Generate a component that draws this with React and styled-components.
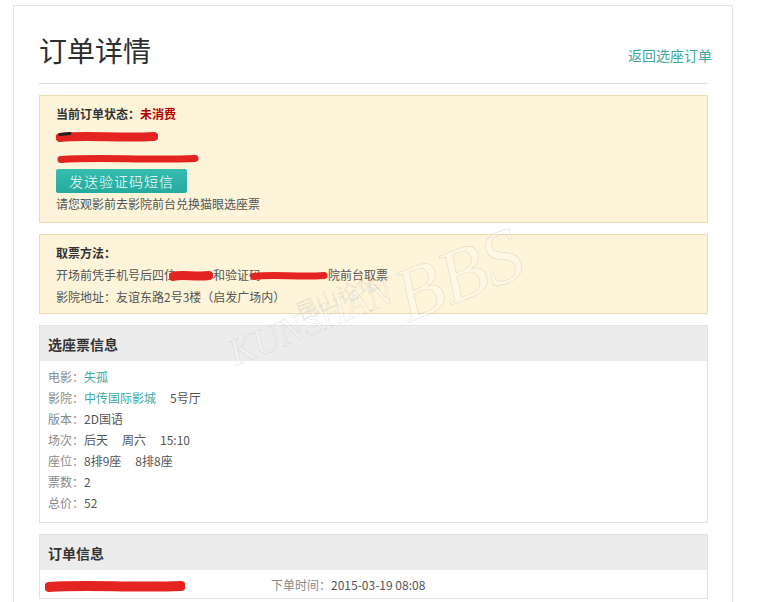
import React from 'react'
import styled, { createGlobalStyle } from 'styled-components'

const GlobalStyle = createGlobalStyle`
  body {
    margin: 0;
    background: #fff;
    font-family: "Noto Sans CJK SC", "Microsoft YaHei", sans-serif;
    font-size: 12px;
    color: #555;
  }
`

const Page = styled.div`
  position: relative;
  padding: 5px 0 0 13px;
  overflow: hidden;
  height: 597px;
`

const Card = styled.div`
  width: 720px;
  border: 1px solid #e6e6e6;
  padding: 27px 24px 20px 25px;
  box-sizing: border-box;
`

const Header = styled.div`
  display: flex;
  justify-content: space-between;
  align-items: flex-end;
  padding-bottom: 16px;
  border-bottom: 1px solid #d9dde0;
`

const Title = styled.h1`
  margin: 0;
  font-size: 28px;
  line-height: 34px;
  font-weight: 400;
  color: #2e2e2e;
`

const BackLink = styled.a`
  font-size: 14px;
  line-height: 20px;
  color: #3aa9a3;
  text-decoration: none;
  margin: 0 -4px 2px 0;
`

const Notice = styled.div`
  margin-top: 11px;
  background: #fef4da;
  border: 1px solid #ecdcb4;
  padding: ${p => p.$tight ? '7px 16px 5px' : '7px 16px 7px'};
  line-height: 22px;
  color: #555;
`

const Line = styled.div`
  height: 22px;
  display: flex;
  align-items: center;
  white-space: nowrap;
`

const Strong = styled.span`
  font-weight: 700;
  color: #333;
`

const Status = styled.span`
  font-weight: 700;
  color: #b30000;
`

const SendButton = styled.button`
  display: block;
  width: 131px;
  height: 24px;
  border: 0;
  border-radius: 2px;
  background: linear-gradient(#35bdb0, #25ab9e);
  color: #fff;
  font-family: inherit;
  font-size: 14px;
  font-weight: 300;
  letter-spacing: 1px;
  padding: 0;
`

const Scribble = styled.svg`
  display: inline-block;
  flex: none;
  margin-left: ${p => p.$ml || 0}px;
  vertical-align: middle;
`

const Panel = styled.div`
  margin-top: 11px;
  border: 1px solid #e2e2e2;
`

const PanelHead = styled.div`
  background: #ececec;
  height: 35px;
  display: flex;
  align-items: center;
  padding-left: 8px;
  font-size: 14px;
  font-weight: 700;
  color: #333;
`

const PanelBody = styled.div`
  padding: 5px 8px 9px;
`

const Row = styled.div`
  line-height: 21px;
  height: 21px;
  white-space: nowrap;
`

const Label = styled.span`
  color: #8a8a8a;
`

const Value = styled.span`
  color: #555;
  margin-right: ${p => p.$gap ? 14 : 0}px;
`

const Link = styled.a`
  color: #3aa9a3;
  text-decoration: none;
  margin-right: 14px;
`

const InfoGrid = styled.div`
  display: grid;
  grid-template-columns: 226px 1fr;
  align-items: center;
  height: 28px;
  padding-left: 5px;
  white-space: nowrap;
`

const Watermark = styled.div`
  position: absolute;
  pointer-events: none;
  left: ${p => p.$x}px;
  top: ${p => p.$y}px;
  transform: rotate(${p => p.$r}deg);
  transform-origin: left bottom;
  font-family: ${p => p.$cjk ? '"Noto Sans CJK SC", sans-serif' : '"Liberation Serif", serif'};
  font-style: ${p => p.$cjk ? 'normal' : 'italic'};
  font-weight: 300;
  font-size: ${p => p.$size}px;
  letter-spacing: ${p => p.$ls || 0}px;
  color: rgba(255, 255, 255, 0.25);
  -webkit-text-stroke: 0.6px rgba(120, 120, 120, 0.2);
  line-height: 1;
  white-space: nowrap;
`

function Redact({ w, h = 12, ml, dark }) {
  return (
    <Scribble $ml={ml} width={w} height={h} viewBox={`0 0 ${w} ${h}`}>
      <path
        d={`M4 ${h / 2 + 1} C ${w * 0.3} ${h / 2 - 2}, ${w * 0.6} ${h / 2 + 2}, ${w - 4} ${h / 2}`}
        stroke="#e42421"
        strokeWidth={h - 4}
        strokeLinecap="round"
        fill="none"
      />
      {dark && <path d={`M4 ${h / 2 - 2} L 14 ${h / 2 - 3}`} stroke="#222" strokeWidth="3" strokeLinecap="round" />}
    </Scribble>
  )
}

export default function App() {
  return (
    <Page>
      <GlobalStyle />
      <Card>
        <Header>
          <Title>订单详情</Title>
          <BackLink href="#">返回选座订单</BackLink>
        </Header>

        <Notice>
          <Line><Strong>当前订单状态：</Strong><Status>未消费</Status></Line>
          <Line><Redact w={102} h={13} dark /></Line>
          <Line><Redact w={142} h={11} ml={1} /></Line>
          <SendButton>发送验证码短信</SendButton>
          <Line>请您观影前去影院前台兑换猫眼选座票</Line>
        </Notice>

        <Notice $tight>
          <Line><Strong>取票方法：</Strong></Line>
          <Line>
            开场前凭手机号后四位
            <Redact w={44} h={13} ml={-7} />
            和验证码
            <Redact w={78} h={11} ml={-11} />
            院前台取票
          </Line>
          <Line>影院地址：友谊东路2号3楼（启发广场内）</Line>
        </Notice>

        <Panel>
          <PanelHead>选座票信息</PanelHead>
          <PanelBody>
            <Row><Label>电影：</Label><Link href="#">失孤</Link></Row>
            <Row><Label>影院：</Label><Link href="#">中传国际影城</Link><Value>5号厅</Value></Row>
            <Row><Label>版本：</Label><Value>2D国语</Value></Row>
            <Row><Label>场次：</Label><Value $gap>后天</Value><Value $gap>周六</Value><Value>15:10</Value></Row>
            <Row><Label>座位：</Label><Value $gap>8排9座</Value><Value>8排8座</Value></Row>
            <Row><Label>票数：</Label><Value>2</Value></Row>
            <Row><Label>总价：</Label><Value>52</Value></Row>
          </PanelBody>
        </Panel>

        <Panel>
          <PanelHead>订单信息</PanelHead>
          <InfoGrid>
            <div><Redact w={140} h={14} /></div>
            <div><Label>下单时间：</Label><Value>2015-03-19 08:08</Value></div>
          </InfoGrid>
        </Panel>
      </Card>

      <Watermark $x={237} $y={334} $r={-22} $size={38}>KUNSHAN</Watermark>
      <Watermark $x={300} $y={300} $r={-22} $size={22} $cjk>昆山论坛</Watermark>
      <Watermark $x={412} $y={258} $r={-22} $size={76}>BBS</Watermark>
    </Page>
  )
}
